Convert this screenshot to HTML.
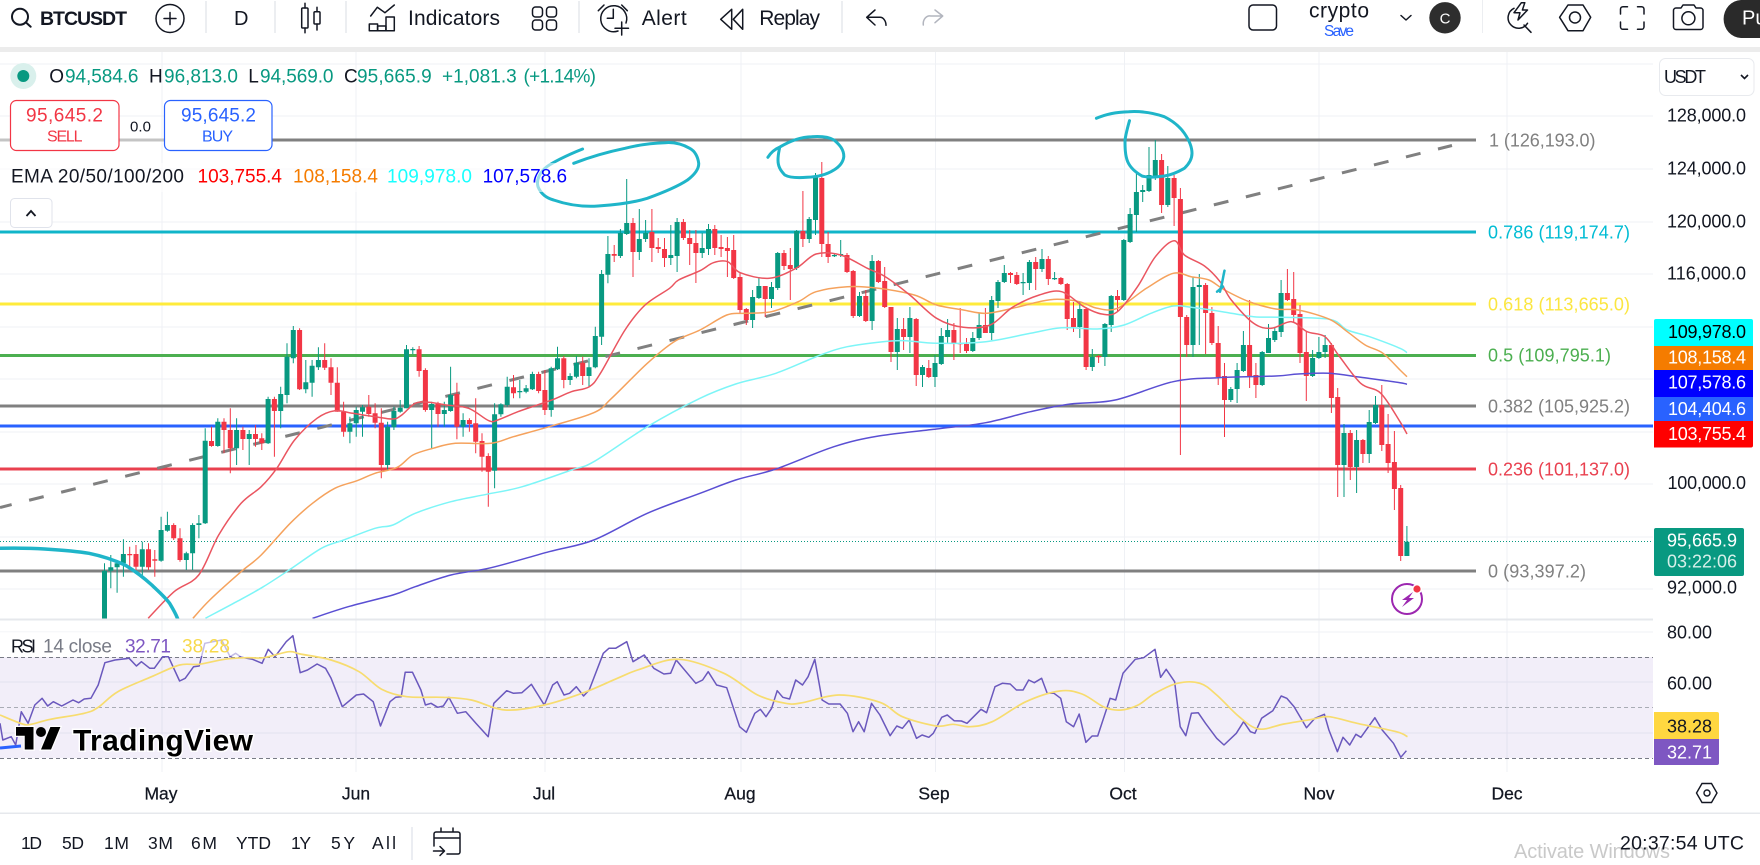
<!DOCTYPE html>
<html><head><meta charset="utf-8"><title>BTCUSDT</title>
<style>
html,body{margin:0;padding:0;background:#fff;width:1760px;height:865px;overflow:hidden}
svg{display:block;font-family:"Liberation Sans",Arial,sans-serif}
text{fill:#131722}
.ic{fill:none;stroke:#131722;stroke-width:1.5;stroke-linecap:round;stroke-linejoin:round}
.a{font-size:18px}
.l{font-size:19px}
.g{fill:#089981}
.f{font-size:18px}
.t{font-size:17.5px;text-anchor:middle;stroke:#131722;stroke-width:.25}
</style></head><body>
<svg width="1760" height="865" viewBox="0 0 1760 865" xmlns="http://www.w3.org/2000/svg">
<defs><clipPath id="cp"><rect x="0" y="52" width="1653" height="567"/></clipPath></defs>
<rect width="1760" height="865" fill="#fff"/>
<rect x="0" y="47" width="1760" height="5" fill="#ececec"/>

<!-- grid -->
<g stroke="#eff1f5" stroke-width="1" fill="none">
<path d="M162 52V772M356 52V772M545 52V772M741 52V772M935.5 52V772M1124.5 52V772M1319 52V772M1507 52V772"/>
<path d="M0 64H1653M0 116H1653M0 169H1653M0 222H1653M0 274H1653M0 327H1653M0 379H1653M0 432H1653M0 484H1653M0 537H1653M0 589H1653"/>
<path d="M0 632H1653M0 682H1653M0 733H1653"/>
</g>

<!-- main chart -->
<g clip-path="url(#cp)">
<g fill="none" stroke-width="3">
<path d="M0 140H1476" stroke="#808080"/>
<path d="M0 140H272" stroke="#c4c4c4"/>
<path d="M0 232H1476" stroke="#10b5c9"/>
<path d="M0 304H1476" stroke="#ffeb3b"/>
<path d="M0 355.5H1476" stroke="#4caf50"/>
<path d="M0 406H1476" stroke="#808080"/>
<path d="M0 426H1653" stroke="#2962ff"/>
<path d="M0 469H1476" stroke="#e9404f"/>
<path d="M0 571H1476" stroke="#808080"/>
<path d="M0 507.5L1452 145.5" stroke="#808080" stroke-dasharray="15 18" stroke-dashoffset="3"/>
</g>
<path d="M0 541.5H1653" stroke="#089981" stroke-width="1" stroke-dasharray="1 2" fill="none"/>
<path id="wg" fill="none" stroke="#089981" stroke-width="1"/>
<path id="wr" fill="none" stroke="#f23645" stroke-width="1"/>
<path id="bg" fill="none" stroke="#089981" stroke-width="5"/>
<path id="br" fill="none" stroke="#f23645" stroke-width="5"/>
<g fill="none" stroke-width="1.5" stroke-linejoin="round">
<path id="e200" stroke="#5a4fd3"/>
<path id="e100" stroke="#7df5f7"/>
<path id="e50" stroke="#f5a25d"/>
<path id="e20" stroke="#ea5560"/>
</g>
<g fill="none" stroke="#1fb5c9" stroke-width="3" stroke-linecap="round" stroke-linejoin="round">
<path d="M582.6 149C565 156 552 163 546.9 166.7C540 172 536 180 538 186.7C541 194 546 198 553.6 200C568 205 583 207 598 206C615 205 632 203 647.3 198.3C662 193 677 187 687.5 180C694 175 699 169 698.7 163.3C698 157 695 151 689.7 148.3C682 144 673 142 665 142.7C651 143 638 145 625 148.3C607 152 590 157 573.7 163.3"/>
<path d="M767.9 157.3C771 152 775 149 780.4 146.7C790 141 800 137 811.6 136.7C821 136 829 137 834 140C840 145 844 150 843.8 156.7C843 163 839 167 833.9 170C826 175 816 177 807 177.3C798 178 790 178 784.8 175C780 170 778 166 778 160C778 155 779 151 779.5 148.3"/>
<path d="M1096.4 118.3C1106 114 1117 112 1128.6 111.7C1141 111 1154 113 1164.3 116.7C1173 121 1180 127 1184.4 133.3C1189 140 1192 147 1192 153.3C1192 159 1189 164 1184.4 168.3C1178 172 1171 175 1164.3 176C1156 177 1149 178 1142 176C1135 172 1130 167 1127.7 161.7C1125 155 1125 147 1125 140C1126 133 1128 126 1129.5 120.7"/>
<path d="M1224.5 270.7C1223 277 1222 285 1220 291.7M1217 291.7L1223 286.7" stroke-width="2.5"/>
<path d="M-2 548.3C15 548 30 548 44.6 549C60 550 75 551 89 553.3C102 556 114 560 125 565C135 571 144 578 151.8 585C158 591 165 597 169.6 603.3C173 609 176 614 177.7 619" stroke-width="3.5"/>
</g>
</g>
<rect x="0" y="163" width="572" height="29" fill="#fff" opacity=".55"/>
<!-- bottom of main pane -->
<rect x="0" y="618.5" width="1760" height="2" fill="#e6e8ec"/>

<!-- RSI pane -->
<rect x="0" y="657" width="1653" height="101" fill="#7e57c2" opacity=".1"/>
<g fill="none" stroke-width="1" stroke-dasharray="4 3">
<path d="M0 657.5H1653M0 758.5H1653" stroke="#787b86"/>
<path d="M0 707.5H1653" stroke="#a9acb5"/>
</g>
<path d="M0 748L21 746" stroke="#2962ff" stroke-width="3" fill="none"/>
<polyline id="rsi" fill="none" stroke="#6a58bd" stroke-width="1.5" stroke-linejoin="round"/>
<path id="rma" fill="none" stroke="#f7dc6f" stroke-width="1.7" stroke-linejoin="round"/>
<rect x="0" y="632" width="241" height="24" fill="#fff" opacity=".6"/>

<!-- TradingView logo -->
<g>
<path transform="translate(16,722) scale(1.25)" d="M14 22H7V11H0V4h14v18zM28 22h-8l7.5-18h8L28 22z" fill="#000" stroke="#fff" stroke-width="2" paint-order="stroke"/>
<circle cx="41" cy="732" r="5" fill="#000"/>
<text x="73" y="750.5" font-size="30" font-weight="bold" textLength="180" style="fill:#000;stroke:#fff;stroke-width:3;paint-order:stroke">TradingView</text>
</g>

<!-- top bar -->
<g class="ic">
<circle cx="20" cy="16.7" r="8" stroke-width="2"/><path d="M26 22.5L30.7 26.7" stroke-width="2"/>
<circle cx="170" cy="18.5" r="14"/><path d="M170 12.5v12M164 18.5h12"/>
<path d="M305 3.3V8M305 28V32.7M317 7.3V11.7M317 24V30"/><rect x="301.7" y="8" width="6.3" height="20" rx="1"/><rect x="314" y="11.7" width="6" height="12.3" rx="1"/>
<path d="M370.7 16L377.3 7.3L385 12.7L394.3 5"/><rect x="369.3" y="24" width="8.3" height="6.7"/><rect x="377.6" y="26" width="8.3" height="4.7"/><rect x="386" y="17" width="8.3" height="13.7"/>
<rect x="532.5" y="7" width="10" height="10" rx="3"/><rect x="546.5" y="7" width="10" height="10" rx="3"/><rect x="532.5" y="20" width="10" height="10" rx="3"/><rect x="546.5" y="20" width="10" height="10" rx="3"/>
<path d="M618 31A13 13 0 1 1 626 23M613.3 9.3V18.3H607.3M598.3 10.7L604 5M627.3 10.7L621.7 5M621.7 22V35M615 28.3H628.5"/>
<path d="M720.7 19.3L731.7 9.3V29.3zM733.3 19.3L742.7 9.3V29.3z"/>
<path d="M875 10L866.7 17.3L875 25M866.7 17.3H880a6 8 0 0 1 6 8"/>
<path d="M935 10L942.7 16L935 22.7M942.7 16H931a6.5 8 0 0 0-7.700 9" stroke="#b2b5be"/>
<rect x="1249" y="5" width="27.500" height="25" rx="4"/>
<path d="M1401 15.500l5 4.500l5-4.500"/>
<path d="M1514 8.300A10.500 10.500 0 1 0 1527.500 23.300M1521.400 2.700L1514 12.700H1520L1518 20L1527.500 10H1522.400L1524.800 2.700ZM1524 25L1531 32.300"/>
<path d="M1559.600 17.300L1568 5H1583L1590.700 17.300L1583 30.700H1568Z"/><circle cx="1575" cy="17.500" r="5.500"/>
<path d="M1620.500 14V9a2.500 2.500 0 0 1 2.500-2.300H1627.500M1637.500 6.700H1641.500a2.500 2.500 0 0 1 2.500 2.300V14M1644 22V27a2.500 2.500 0 0 1-2.500 2.300H1637.500M1627.500 29.300H1623a2.500 2.500 0 0 1-2.500-2.300V22"/>
<path d="M1673.500 10.500a2.500 2.500 0 0 1 2.500-2.500H1681L1683 5H1694L1696 8H1700.500a2.500 2.500 0 0 1 2.500 2.500V27a2.500 2.500 0 0 1-2.500 2.500H1676a2.500 2.500 0 0 1-2.500-2.500Z"/><circle cx="1688.400" cy="18.300" r="6.500"/>
</g>
<g stroke="#eceef1" stroke-width="2" fill="none">
<path d="M206 1V33M275 1V33M346 1V33M579 1V33M842 1V33"/>
</g>
<path d="M1482.500 0V33" stroke="#eceef1" stroke-width="1"/>
<text x="40" y="25" font-size="19.500" font-weight="bold" textLength="87">BTCUSDT</text>
<text x="234" y="25" font-size="20" textLength="12.500">D</text>
<text x="408" y="25" font-size="21" textLength="92">Indicators</text>
<text x="641.700" y="25" font-size="21" textLength="45">Alert</text>
<text x="759.300" y="25" font-size="21" textLength="60.700">Replay</text>
<text x="1309" y="17.500" font-size="21" textLength="60">crypto</text>
<text x="1324" y="36" font-size="15.500" textLength="30" style="fill:#2962ff">Save</text>
<circle cx="1445" cy="17.800" r="15.700" fill="#2e2e2e"/>
<text x="1445" y="23.500" font-size="15" text-anchor="middle" style="fill:#fff">C</text>
<path d="M1741 0H1760V38H1741A18 19 0 0 1 1723.600 19A18 19 0 0 1 1741 0Z" fill="#2a2a2a"/>
<text x="1742" y="24.500" font-size="20" style="fill:#fff">Pu</text>

<!-- legend -->
<circle cx="23.300" cy="76" r="13" fill="#d9f0ec"/><circle cx="23.300" cy="76" r="6" fill="#089981"/>
<g class="l">
<text x="49.300" y="82.700">O</text><text class="g" x="65" y="82.700" textLength="73.500">94,584.6</text>
<text x="149" y="82.700">H</text><text class="g" x="164" y="82.700" textLength="74">96,813.0</text>
<text x="248.300" y="82.700">L</text><text class="g" x="260" y="82.700" textLength="73.500">94,569.0</text>
<text x="344" y="82.700">C</text><text class="g" x="357" y="82.700" textLength="74.700">95,665.9</text>
<text class="g" x="442" y="82.700" textLength="74.700">+1,081.3</text>
<text class="g" x="523.500" y="82.700" textLength="72.500">(+1.14%)</text>
</g>
<rect x="10.500" y="100.500" width="108.500" height="50" rx="6" fill="#fff" stroke="#f23645" stroke-width="1.200"/>
<text x="26" y="121.500" font-size="19" textLength="77" style="fill:#f23645">95,645.2</text>
<text x="47" y="141.500" font-size="16" textLength="35.500" style="fill:#f23645">SELL</text>
<text x="130" y="131.500" font-size="15" textLength="21">0.0</text>
<rect x="164.500" y="100.500" width="107.500" height="50" rx="6" fill="#fff" stroke="#2962ff" stroke-width="1.200"/>
<text x="181" y="121.500" font-size="19" textLength="75" style="fill:#2962ff">95,645.2</text>
<text x="202" y="141.500" font-size="16" textLength="31" style="fill:#2962ff">BUY</text>
<g class="l">
<text x="11" y="182.500" textLength="173">EMA 20/50/100/200</text>
<text x="197.500" y="182.500" textLength="84.500" style="fill:#f00">103,755.4</text>
<text x="293" y="182.500" textLength="85" style="fill:#f57c00">108,158.4</text>
<text x="387" y="182.500" textLength="85" style="fill:#18ffff">109,978.0</text>
<text x="482.600" y="182.500" textLength="84.500" style="fill:#0000ff">107,578.6</text>
</g>
<rect x="10.500" y="198.500" width="41.500" height="29" rx="4" fill="#fff" stroke="#e0e3eb"/>
<path d="M26.500 216l4.500-5l4.500 5" fill="none" stroke="#131722" stroke-width="1.800"/>
<g class="l">
<text x="11" y="652.500" textLength="25" font-size="18" style="font-size:18px">RSI</text>
<text x="43" y="652.500" textLength="69" style="fill:#787b86">14 close</text>
<text x="125" y="652.500" textLength="46" style="fill:#7e57c2">32.71</text>
<text x="182" y="652.500" textLength="48" style="fill:#f7d94c">38.28</text>
</g>

<!-- fib labels -->
<g class="f">
<text x="1489" y="146.500" textLength="106.500" style="fill:#808080">1 (126,193.0)</text>
<text x="1488" y="238.500" textLength="142" style="fill:#00bcd4">0.786 (119,174.7)</text>
<text x="1488" y="310.500" textLength="142" style="fill:#fbe640">0.618 (113,665.0)</text>
<text x="1488" y="361.500" textLength="123" style="fill:#4caf50">0.5 (109,795.1)</text>
<text x="1488" y="412.500" textLength="142" style="fill:#808080">0.382 (105,925.2)</text>
<text x="1488" y="475.500" textLength="142" style="fill:#e9404f">0.236 (101,137.0)</text>
<text x="1488" y="577.500" textLength="98" style="fill:#808080">0 (93,397.2)</text>
</g>

<!-- alert icon -->
<circle cx="1407" cy="599" r="15" fill="none" stroke="#9c27b0" stroke-width="2"/>
<path d="M1413 592l-11 8h5l-5 7l12-9h-5z" fill="#9c27b0"/>
<circle cx="1417" cy="589" r="5" fill="#fff"/><circle cx="1417" cy="589" r="3.600" fill="#f23645"/>

<!-- price axis -->
<rect x="1653" y="52" width="107" height="761" fill="#fff"/>
<rect x="1659.500" y="58.500" width="94.500" height="37" rx="6" fill="#fff" stroke="#e8eaee"/>
<text x="1664" y="83" class="a" textLength="42">USDT</text>
<path d="M1741 75l3.500 3.500l3.500-3.500" fill="none" stroke="#131722" stroke-width="1.600"/>
<g class="a">
<text x="1667" y="121.500" textLength="79">128,000.0</text>
<text x="1667" y="174.500" textLength="79">124,000.0</text>
<text x="1667" y="227.500" textLength="79">120,000.0</text>
<text x="1667" y="279.500" textLength="79">116,000.0</text>
<text x="1667" y="332" textLength="79">112,000.0</text>
<text x="1667.500" y="489" textLength="78.500">100,000.0</text>
<text x="1667" y="593.500" textLength="70">92,000.0</text>
<text x="1667" y="638.500" textLength="45">80.00</text>
<text x="1667" y="689.500" textLength="45">60.00</text>
</g>
<path d="M1654 321a2 2 0 0 1 2-2H1751a2 2 0 0 1 2 2V346H1654z" fill="#00ffff"/>
<rect x="1654" y="346" width="99" height="24.500" fill="#f57c00"/>
<rect x="1654" y="370" width="99" height="27" fill="#0000ff"/>
<rect x="1654" y="397" width="99" height="24.500" fill="#2962ff"/>
<path d="M1654 421H1753V445.500a2 2 0 0 1-2 2H1654z" fill="#ff0000"/>
<rect x="1654" y="528" width="90" height="48" rx="2" fill="#089981"/>
<g class="a">
<text x="1668" y="338" textLength="78" style="fill:#000">109,978.0</text>
<text x="1668" y="363.500" textLength="78" style="fill:#fff">108,158.4</text>
<text x="1668" y="388.500" textLength="78" style="fill:#fff">107,578.6</text>
<text x="1668" y="415" textLength="78" style="fill:#fff">104,404.6</text>
<text x="1668" y="440" textLength="78" style="fill:#fff">103,755.4</text>
<text x="1667" y="546.500" textLength="70" style="fill:#fff">95,665.9</text>
<text x="1667" y="567.500" textLength="70" style="fill:#d5efe9">03:22:06</text>
</g>
<path d="M1654 712H1717a2 2 0 0 1 2 2V739H1654z" fill="#ffd740"/>
<path d="M1654 739H1719V763a2 2 0 0 1-2 2H1654z" fill="#7e57c2"/>
<text x="1667" y="732.500" class="a" textLength="45" style="fill:#131722">38.28</text>
<text x="1667" y="758.500" class="a" textLength="45" style="fill:#fff">32.71</text>

<!-- time axis -->
<rect x="0" y="772" width="1760" height="40" fill="#fff"/>
<g>
<text class="t" x="161" y="799.500">May</text>
<text class="t" x="356" y="799.500">Jun</text>
<text class="t" x="544" y="799.500">Jul</text>
<text class="t" x="740" y="799.500">Aug</text>
<text class="t" x="934" y="799.500">Sep</text>
<text class="t" x="1123" y="799.500">Oct</text>
<text class="t" x="1319" y="799.500">Nov</text>
<text class="t" x="1507" y="799.500">Dec</text>
</g>
<path d="M1696.500 793l5.500-9.500h9.500l5.500 9.500l-5.500 9.500h-9.500z" fill="none" stroke="#131722" stroke-width="1.400"/><circle cx="1707" cy="793" r="3" fill="none" stroke="#131722" stroke-width="1.400"/>
<rect x="0" y="812.500" width="1760" height="1.500" fill="#e6e8ec"/>

<!-- bottom bar -->
<g font-size="17.500">
<text x="21" y="849" textLength="21">1D</text>
<text x="62" y="849" textLength="22">5D</text>
<text x="104" y="849" textLength="25">1M</text>
<text x="148" y="849" textLength="25">3M</text>
<text x="191" y="849" textLength="26">6M</text>
<text x="236" y="849" textLength="35">YTD</text>
<text x="291" y="849" textLength="20">1Y</text>
<text x="331" y="849" textLength="24">5Y</text>
<text x="372" y="849" textLength="24">All</text>
</g>
<path d="M412 827V860" stroke="#e0e3eb" stroke-width="1.300"/>
<path class="ic" d="M434 846V834a2 2 0 0 1 2-2H458a2 2 0 0 1 2 2V852a2 2 0 0 1-2 2H447M434 838H460M441 828V832M453 828V832M433.500 851H444M440 846.500l4.500 4.500l-4.500 4.500"/>
<text x="1514" y="858" font-size="20" textLength="156" style="fill:#c9c9c9">Activate Windows</text>
<text x="1620" y="849.500" font-size="19.500" textLength="124">20:37:54 UTC</text>
</svg>
<script>
(function(){
function conv(a,ox,fx,oy,fy){var s='';for(var i=0;i<a.length;i+=2){s+=(ox+a[i]/fx).toFixed(1)+','+(oy+a[i+1]/fy).toFixed(1)+' ';}return s;}
function Z3(a){return conv(a,0,2.24,230,3);}
function Z4(a){return conv(a,700,2.24,230,3);}
function Z6(a){return conv(a,0,1.782,620,3);}
function Z7(a){return conv(a,880,1.782,620,3);}
function set(id,p){document.getElementById(id).setAttribute('points',p);}
function smooth(id,s){var P=s.trim().split(/\s+/).map(function(v){return v.split(',').map(Number);});
var d='M'+P[0][0]+' '+P[0][1];
for(var i=0;i<P.length-1;i++){var a=P[Math.max(0,i-1)],b=P[i],c=P[i+1],e=P[Math.min(P.length-1,i+2)];
d+='C'+(b[0]+(c[0]-a[0])/6).toFixed(1)+' '+(b[1]+(c[1]-a[1])/6).toFixed(1)+' '+(c[0]-(e[0]-b[0])/6).toFixed(1)+' '+(c[1]-(e[1]-b[1])/6).toFixed(1)+' '+c[0]+' '+c[1];}
document.getElementById(id).setAttribute('d',d);}
smooth('e20',Z3([332,1165,390,1085,445,1035,490,915,540,820,585,770,620,715,660,630,710,565,750,542,790,550,840,560,880,567,900,555,930,520,960,517,1000,525,1050,535,1095,572,1115,570,1160,545,1210,522,1240,508,1280,485,1320,470,1345,430,1400,300,1445,225,1500,175,1520,150,1568,122])+Z4([30,98,62,95,90,128,155,145,215,115,260,72,315,75,375,115,415,140,470,195,530,265,590,292,650,285,700,232,760,195,810,185,860,230,900,252,935,245,980,170,1020,80,1062,32,1085,75,1130,108,1165,155,1190,210,1240,280,1280,295,1325,275,1360,305,1400,320,1430,375,1480,460,1525,490,1568,575])+'1407,434');
smooth('e50',Z3([432,1165,470,1110,540,1025,585,975,650,880,700,820,750,775,800,752,840,730,890,712,925,675,970,655,1020,640,1100,640,1150,620,1230,590,1330,548,1370,505,1450,400,1510,335,1568,300])+Z4([60,255,100,250,160,245,220,215,260,185,330,170,400,175,480,195,530,225,590,240,640,250,700,235,760,215,800,208,850,215,890,235,935,235,1000,175,1060,130,1100,140,1140,150,1175,180,1230,215,1290,237,1340,240,1410,268,1450,305,1490,345,1530,370,1568,420])+'1407,376.7');
smooth('e100',Z3([460,1165,530,1115,590,1070,650,1018,720,955,770,930,840,895,880,885,930,850,1010,815,1090,793,1170,770,1280,720,1330,695,1450,590,1568,505])+Z4([80,462,170,430,270,375,330,350,410,335,460,332,530,340,640,335,740,310,810,293,890,297,950,285,1010,250,1060,228,1100,232,1170,245,1240,260,1300,262,1410,268,1450,300,1500,320,1568,355])+'1407,352.7');
smooth('e200',Z3([700,1165,780,1130,880,1095,930,1070,1010,1035,1100,1013,1230,965,1330,930,1450,850,1568,790])+Z4([80,750,170,717,300,650,400,618,530,597,640,578,740,545,830,522,930,510,1060,455,1160,443,1290,438,1340,432,1410,430,1480,442,1568,458])+'1407,384.3');
set('rsi',Z6([0,310,5,360,20,350,28,375,38,275,50,310,62,255,75,235,85,258,95,245,110,258,130,240,140,248,150,237,162,235,175,195,187,128,205,120,230,115,243,138,252,125,267,145,275,145,290,110,300,110,320,183,330,175,345,140,355,138,365,70,395,60,410,110,420,100,430,112,450,118,467,130,478,88,490,110,510,65,522,47,535,158,548,150,565,132,580,145,590,175,610,260,635,225,648,222,665,245,678,318,695,245,705,232,715,230,722,157,735,157,750,210,758,255,768,250,780,262,790,258,800,232,815,280,830,275,848,310,870,350,880,250,903,212,915,220,930,218,947,193,970,255,985,195,993,185,1005,225,1015,220,1027,200,1040,228,1050,210,1075,100,1085,85,1097,85,1117,65,1128,125,1148,105,1165,145,1183,162,1195,160,1205,120,1240,190,1252,180,1262,155,1277,195,1295,203,1318,320,1330,337,1345,280,1355,268,1365,290,1375,265,1385,212,1395,232,1407,237,1418,180,1430,195,1440,170,1452,118,1465,240,1477,252,1497,252,1510,280,1520,335,1530,305,1540,335,1553,250,1568,285])+Z7([18,347,30,318,40,325,52,300,65,355,75,345,87,352,95,340,110,292,120,285,132,302,145,303,155,310,180,268,190,278,205,200,218,190,232,192,243,210,255,210,265,180,275,188,288,175,298,220,310,220,322,235,332,305,345,320,355,282,367,367,378,348,388,348,410,235,420,240,433,160,455,118,470,113,490,88,500,172,510,148,525,185,535,320,545,347,555,280,567,278,580,310,600,355,613,375,635,340,648,305,660,335,668,340,680,295,700,272,715,228,725,235,738,260,760,323,775,295,792,283,800,330,815,395,825,352,837,375,848,343,857,352,882,293,895,330,915,370,928,412,938,392]));
smooth('rma',Z6([0,285,40,312,55,313,90,298,150,280,175,262,210,215,270,170,320,135,355,133,400,118,440,113,470,113,515,95,535,102,590,120,640,155,680,208,725,230,790,232,840,240,900,270,970,255,1040,218,1100,175,1140,148,1210,118,1290,160,1350,225,1400,250,1430,248,1495,225,1568,247])+Z7([40,290,100,318,130,313,160,320,200,305,260,245,320,213,360,222,400,262,430,270,460,255,490,220,530,190,570,190,600,225,640,290,675,327,720,312,770,298,800,290,850,310,920,335,940,350]));
// candles: [green?, bodyTop, bodyBottom, wickTop, wickBottom]
var A=[[1,1022,1200,1000,1200],[1,1012,1022,975,1075],[1,1000,1012,990,1088],[1,972,1000,928,1040],[0,972,975,950,1010],[0,972,1010,945,1030],[1,958,1010,935,1040],[0,958,1012,940,1020],[0,988,992,960,1040],[1,900,992,860,995],[1,885,902,845,905],[0,885,925,880,930],[0,925,990,895,995],[1,970,990,965,1020],[1,885,970,880,1020],[1,880,885,855,925],[1,632,880,595,882],[0,633,648,590,650],[1,575,648,565,650],[0,575,600,565,670],[0,600,655,535,730],[1,600,655,565,705],[0,600,627,590,660],[1,612,627,600,705],[0,612,627,585,650],[0,625,640,610,660],[1,507,640,500,642],[0,507,543,500,680],[1,492,543,470,595],[1,380,495,340,520],[1,300,385,288,400],[0,300,478,295,480],[1,457,478,390,490],[1,407,458,390,500],[1,390,412,352,420],[0,390,413,340,420],[0,412,458,385,495],[0,458,545,412,545],[0,545,605,515,620],[1,580,605,560,640],[1,540,580,530,620],[1,532,545,525,620],[0,530,552,495,560],[0,550,578,520,595],[0,578,705,535,745],[1,590,705,575,720],[1,543,592,530,600],[1,533,545,510,548],[1,358,535,345,535],[1,357,359,352,372],[0,358,423,348,440],[0,420,540,415,545],[1,522,540,515,655],[0,520,552,515,590],[1,540,552,515,590],[1,495,543,410,545],[0,492,590,458,628],[1,570,590,550,620],[0,570,582,565,605],[0,580,635,505,670],[0,633,680,610,725],[0,678,725,670,830],[1,553,722,520,775],[1,523,553,520,560],[1,470,525,440,530],[0,472,490,435,505],[1,483,487,450,505],[1,475,485,465,490],[1,432,478,425,480],[0,432,483,425,490],[0,480,540,420,555],[1,415,540,410,560],[1,385,418,350,420],[0,385,450,378,475],[1,438,450,430,465],[1,398,440,378,445],[0,398,438,380,465],[1,412,438,385,470],[1,318,412,290,415],[1,132,320,120,345],[1,72,134,18,160],[0,72,77,45,96]];
var B=[[1,233,256,229,258],[1,223,234,179,235],[0,223,252,218,277],[1,239,252,209,260],[1,233,239,220,242],[0,232,248,209,262],[0,247,249,238,253],[0,249,258,238,267],[1,255,258,225,265],[1,222,256,218,272],[0,222,238,219,240],[0,238,244,230,265],[0,243,253,230,283],[1,248,253,233,258],[1,229,249,224,255],[0,229,248,225,255],[0,247,249,235,257],[0,248,251,237,277],[0,250,278,235,279],[0,277,310,273,313],[0,309,320,308,325],[1,297,320,290,328],[1,286,298,277,299],[0,286,299,286,317],[1,287,299,282,308],[1,253,288,252,290],[0,253,266,250,270],[0,265,269,248,300],[1,231,268,230,270],[0,231,239,191,247],[1,219,239,217,243],[1,177,220,173,235],[0,178,244,162,257],[0,244,257,232,263],[1,255,256,253,257],[1,254,255,240,257],[0,255,272,253,273],[0,271,316,270,318],[1,296,316,292,317],[0,296,321,290,322],[1,261,321,255,330],[0,261,282,260,283],[0,281,307,267,308],[0,307,352,307,362],[1,329,352,318,370],[0,329,337,318,350],[1,318,337,307,353],[0,319,375,318,386],[1,367,375,365,387],[0,368,377,360,378],[1,363,377,355,387],[1,336,364,328,365],[1,330,337,319,343],[0,330,344,323,360],[0,343,344,308,353],[0,344,351,338,353],[1,338,351,332,352],[1,325,338,313,340],[0,325,333,308,333],[1,300,333,296,340],[1,282,301,280,308],[1,273,282,265,283],[0,273,275,272,283],[0,275,284,272,285],[1,282,283,273,295],[1,262,283,260,290],[0,262,269,257,290],[1,259,269,249,272],[0,259,279,256,285],[1,278,279,272,280],[0,278,284,277,285],[0,284,319,283,330],[0,318,327,302,332],[1,309,327,302,338],[0,309,367,307,370],[1,357,367,349,371],[0,356,357,355,363],[1,324,357,323,366],[1,296,325,295,332],[0,296,300,290,312],[1,240,300,239,301],[1,214,242,208,243],[1,192,215,173,232],[1,190,192,185,202],[1,175,191,147,192],[1,160,176,140,180],[0,160,205,154,213],[1,178,205,166,207],[0,178,198,175,226],[0,199,317,188,455],[0,317,345,315,357],[1,287,345,277,357],[1,285,287,274,345],[0,285,313,283,354],[0,313,343,307,345],[0,343,377,326,385],[0,376,400,363,437],[1,389,400,387,402],[1,370,389,363,403],[1,345,371,331,372],[0,345,377,300,388],[0,375,385,363,398],[1,352,385,351,386],[1,338,353,324,353],[1,331,340,327,342],[1,293,332,280,337],[0,293,300,269,301],[0,299,315,272,322],[0,314,353,305,363],[0,352,376,332,401],[1,358,376,350,377],[1,352,358,337,359],[1,345,352,335,358],[0,345,398,343,413],[0,397,465,388,497],[1,433,465,424,497],[0,433,467,430,480],[1,440,467,430,493],[0,440,454,439,463],[1,422,454,410,463],[1,405,423,396,424],[0,405,445,385,451],[0,444,463,414,473],[0,462,489,431,510],[0,488,556,485,561],[1,541.7,556,526,556]];
var bg='',br='',wg='',wr='';
function add(c,i,f){var x=(104.5+6.292*i).toFixed(1);var t=f(c[1]),b=f(c[2]),wt=f(c[3]),wb=f(c[4]);if(b-t<1.2)b=t+1.2;
var w='M'+x+' '+wt.toFixed(1)+'V'+wb.toFixed(1),d='M'+x+' '+t.toFixed(1)+'V'+b.toFixed(1);
if(c[0]){wg+=w;bg+=d;}else{wr+=w;br+=d;}}
A.forEach(function(c,i){add(c,i,function(v){return 230+v/3;});});
B.forEach(function(c,i){add(c,A.length+i,function(v){return v;});});
document.getElementById('bg').setAttribute('d',bg);
document.getElementById('br').setAttribute('d',br);
document.getElementById('wg').setAttribute('d',wg);
document.getElementById('wr').setAttribute('d',wr);
})();
</script>
</body></html>
